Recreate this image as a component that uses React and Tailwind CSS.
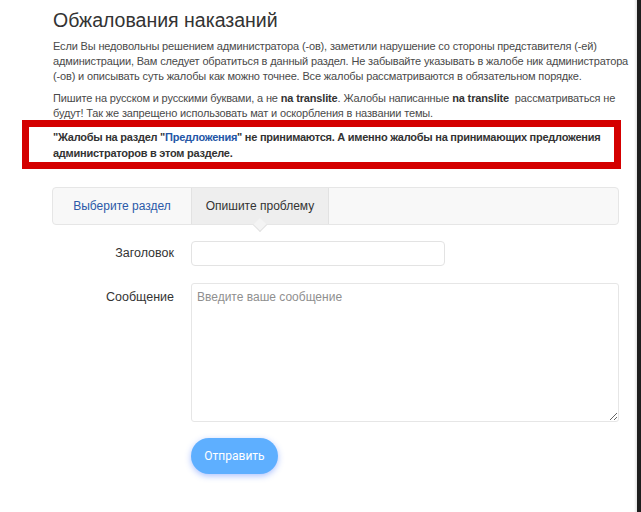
import React from 'react';

const App = () => {
    return (
        <div className="flex h-[512px] w-full bg-white font-['Liberation_Sans',Arial,sans-serif]">
            <div className="flex-1 overflow-hidden">
                <div className="ml-[53px] w-[566px] pt-[9px]">
                    {/* ── TITLE ── */}
                    <h1 className="text-[19.5px] leading-[22px] text-[#333]">Обжалования наказаний</h1>

                    <p className="mt-[8px] w-[576px] text-[11px] leading-[15px] tracking-[-0.15px] text-[#4a4a4a]">
                        Если Вы недовольны решением администратора (-ов), заметили нарушение со стороны представителя (-ей) администрации, Вам следует обратиться в данный раздел. Не забывайте указывать в жалобе ник администратора (-ов) и описывать суть жалобы как можно точнее. Все жалобы рассматриваются в обязательном порядке.
                    </p>
                    <p className="mt-[7px] w-[576px] text-[11px] leading-[15px] tracking-[-0.15px] text-[#4a4a4a]">
                        Пишите на русском и русскими буквами, а не <b className="text-[#333]">na translite</b>. Жалобы написанные <b className="text-[#333]">na translite</b>&nbsp; рассматриваться не будут! Так же запрещено использовать мат и оскорбления в названии темы.
                    </p>

                    {/* ── WARNING BOX ── */}
                    <div className="-ml-[31px] mt-[-1px] w-[599px] border-[7px] border-[#d40000] pl-[24px] pr-[4px] pt-[2px] pb-[1px]">
                        <p className="text-[11px] font-bold leading-[16px] tracking-[-0.25px] text-[#333]">
                            "Жалобы на раздел "<span className="text-[#2456a6]">Предложения</span>" не принимаются. А именно жалобы на принимающих предложения администраторов в этом разделе.
                        </p>
                    </div>

                    {/* ── TABS ── */}
                    <div className="relative mt-[18px] flex h-[38px] w-[567px] -ml-px rounded-[4px] border border-[#e6e6e6] bg-[#f8f8f8]">
                        <div className="flex w-[138px] items-center justify-center text-[12px] text-[#2b5aa8]">
                            Выберите раздел
                        </div>
                        <div className="relative flex w-[138px] items-center justify-center border-x border-[#e2e2e2] bg-[#eeeeee] text-[12px] text-[#333]">
                            Опишите проблему
                            <div className="absolute -bottom-[6px] left-1/2 h-[10px] w-[10px] -translate-x-1/2 rotate-45 border-b border-r border-[#e2e2e2] bg-[#f4f4f4]" />
                        </div>
                    </div>

                    {/* ── FORM ── */}
                    <div className="mt-[16px] flex items-center">
                        <label className="w-[121px] text-right text-[12.5px] text-[#333]">Заголовок</label>
                        <input
                            type="text"
                            className="ml-[17px] h-[25px] w-[254px] rounded-[4px] border border-[#e3e3e3] bg-white px-[6px] text-[12px] outline-none"
                        />
                    </div>
                    <div className="mt-[17px] flex items-start">
                        <label className="w-[121px] pt-[5px] text-right text-[12.5px] text-[#333]">Сообщение</label>
                        <textarea
                            placeholder="Введите ваше сообщение"
                            className="ml-[17px] h-[139px] w-[428px] rounded-[3px] border border-[#e6e6e6] bg-white px-[5px] py-[5px] text-[12px] leading-[16px] text-[#333] outline-none placeholder:text-[#8f8f8f]"
                        />
                    </div>
                    <div className="mt-[16px] pl-[138px]">
                        <button className="h-[36px] w-[87px] rounded-full bg-[#5eafff] font-['Roboto',sans-serif] text-[12px] text-white shadow-[0_2px_6px_rgba(70,120,255,0.45)]">
                            Отправить
                        </button>
                    </div>
                </div>
            </div>
            <div className="w-[3px] bg-gradient-to-r from-white to-[#e4e4e4]" />
            <div className="w-[4px] bg-[#1e1e1e]" />
        </div>
    );
};

export default App;
